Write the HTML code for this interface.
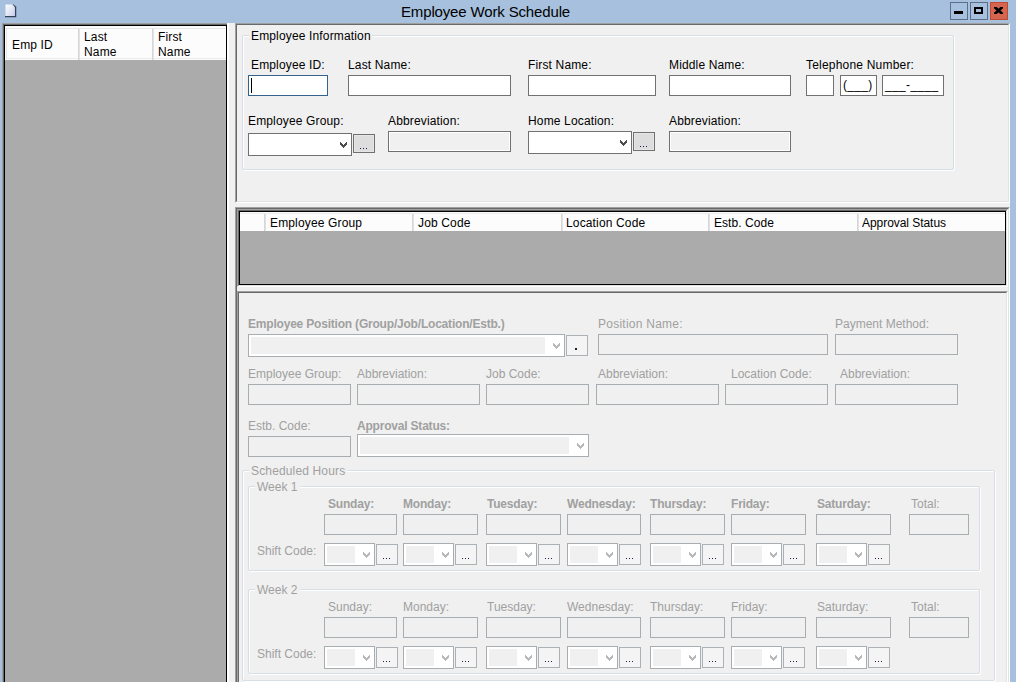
<!DOCTYPE html>
<html><head><meta charset="utf-8"><style>
html,body{margin:0;padding:0;}
body{width:1016px;height:682px;overflow:hidden;position:relative;background:#a6c0dd;font-family:"Liberation Sans", sans-serif;font-size:12px;}
.a{position:absolute;box-sizing:content-box;}
.t{position:absolute;font-size:12px;line-height:14px;white-space:nowrap;}
.btn{text-align:center;font-size:12px;color:#000;letter-spacing:-1px;}
.grp{border:1px solid #d5dfe5;border-radius:2px;box-shadow:inset 1px 1px 0 #fff, 1px 1px 0 #fff;}
</style></head><body>

<svg class="a" style="left:0px;top:0px" width="20" height="20" viewBox="0 0 20 20"><defs><linearGradient id="pg" x1="0" y1="0" x2="1" y2="1"><stop offset="0" stop-color="#ffffff"/><stop offset="1" stop-color="#c6cdea"/></linearGradient></defs><path d="M5.5 4.5 H13 L15 6.5 V16.5 H5.5 Z" fill="url(#pg)"/><path d="M5 16.6 H15.6 V6.6" fill="none" stroke="#34435e" stroke-width="1.3"/><path d="M13 4.6 L15.4 7" fill="none" stroke="#34435e" stroke-width="1.1"/><path d="M13.2 5.2 L14.5 6.5 L13.2 6.5 Z" fill="#fff"/></svg>
<div class="t" style="left:401px;top:6px;color:#000;letter-spacing:-0.15px;font-size:15px;line-height:17px;top:3px;">Employee Work Schedule</div>
<div class="a" style="left:950px;top:2px;width:16px;height:16px;border:1px solid #5b6e8a;background:#a6c0dd;"></div>
<div class="a" style="left:970px;top:2px;width:16px;height:16px;border:1px solid #5b6e8a;background:#a6c0dd;"></div>
<div class="a" style="left:990px;top:2px;width:16px;height:16px;border:1px solid #bd4a33;background:#d4654f;"></div>
<div class="a" style="left:954px;top:11px;width:9px;height:3px;background:#000;"></div>
<div class="a" style="left:974px;top:7px;width:5px;height:3px;border:2px solid #000;background:#a6c0dd;"></div>
<svg class="a" style="left:994px;top:7px" width="9" height="7" viewBox="0 0 9 7"><path d="M0 -0.6 L9 7.6 M9 -0.6 L0 7.6" stroke="#000" stroke-width="2.7"/></svg>
<div class="a" style="left:2px;top:23px;width:225px;height:698px;border-style:solid;border-width:1px;border-color:#a0a0a0 #fff #fff #a0a0a0;"></div>
<div class="a" style="left:3px;top:24px;width:223px;height:696px;border-style:solid;border-width:1px;border-color:#696969 #e3e3e3 #e3e3e3 #696969;"></div>
<div class="a" style="left:4px;top:25px;width:221px;height:700px;border:1px solid #000;background:#ababab;"></div>
<div class="a" style="left:5px;top:26px;width:221px;height:34px;background:#fcfcfc;"></div>
<div class="a" style="left:6px;top:28px;width:220px;height:1px;background:#e6e6e6;"></div>
<div class="a" style="left:6px;top:28px;width:1px;height:31px;background:#e6e6e6;"></div>
<div class="a" style="left:6px;top:58px;width:220px;height:1px;background:#ececec;"></div>
<div class="a" style="left:78px;top:29px;width:1px;height:31px;background:#d6d6d6;"></div>
<div class="a" style="left:79px;top:29px;width:1px;height:31px;background:#e2e2e2;"></div>
<div class="a" style="left:152px;top:29px;width:1px;height:31px;background:#d6d6d6;"></div>
<div class="a" style="left:153px;top:29px;width:1px;height:31px;background:#e2e2e2;"></div>
<div class="t" style="left:12px;top:38px;color:#000;letter-spacing:0.15px;">Emp ID</div>
<div class="t" style="left:84px;top:30px;color:#000;letter-spacing:0.15px;">Last</div>
<div class="t" style="left:84px;top:45px;color:#000;letter-spacing:0.15px;">Name</div>
<div class="t" style="left:158px;top:30px;color:#000;letter-spacing:0.15px;">First</div>
<div class="t" style="left:158px;top:45px;color:#000;letter-spacing:0.15px;">Name</div>
<div class="a" style="left:229px;top:23px;width:6px;height:700px;background:#f0f0f0;"></div>
<div class="a" style="left:227px;top:23px;width:2px;height:700px;background:#fff;"></div>
<div class="a" style="left:235px;top:23px;width:775px;height:700px;background:#f0f0f0;"></div>
<div class="a" style="left:235px;top:23px;width:773px;height:178px;border-style:solid;border-width:1px;border-color:#a0a0a0 #fff #fff #a0a0a0;"></div>
<div class="a" style="left:236px;top:24px;width:771px;height:176px;border-style:solid;border-width:1px;border-color:#696969 #e3e3e3 #e3e3e3 #696969;"></div>
<div class="a" style="left:235px;top:207px;width:773px;height:598px;border-style:solid;border-width:1px;border-color:#a0a0a0 #fff #fff #a0a0a0;"></div>
<div class="a" style="left:236px;top:208px;width:771px;height:596px;border-style:solid;border-width:1px;border-color:#696969 #e3e3e3 #e3e3e3 #696969;"></div>
<div class="a grp" style="left:242px;top:35px;width:710px;height:133px;"></div>
<div class="a" style="left:249px;top:33px;width:123px;height:4px;background:#f0f0f0;"></div>
<div class="t" style="left:251px;top:29px;color:#000;letter-spacing:0.15px;">Employee Information</div>
<div class="t" style="left:251px;top:58px;color:#000;letter-spacing:0.15px;">Employee ID:</div>
<div class="t" style="left:348px;top:58px;color:#000;letter-spacing:0.15px;">Last Name:</div>
<div class="t" style="left:528px;top:58px;color:#000;letter-spacing:0.15px;">First Name:</div>
<div class="t" style="left:669px;top:58px;color:#000;letter-spacing:0.15px;">Middle Name:</div>
<div class="t" style="left:806px;top:58px;color:#000;letter-spacing:0.2px;">Telephone Number:</div>
<div class="a" style="left:248px;top:75px;width:78px;height:19px;border:1px solid #34638f;background:#fff;"><div class="a" style="left:2px;top:2px;width:1px;height:15px;background:#000"></div></div>
<div class="a" style="left:348px;top:75px;width:161px;height:19px;border:1px solid #717171;background:#fff;"></div>
<div class="a" style="left:528px;top:75px;width:126px;height:19px;border:1px solid #717171;background:#fff;"></div>
<div class="a" style="left:669px;top:75px;width:120px;height:19px;border:1px solid #717171;background:#fff;"></div>
<div class="a" style="left:806px;top:75px;width:26px;height:19px;border:1px solid #717171;background:#fff;"></div>
<div class="a" style="left:840px;top:75px;width:35px;height:19px;border:1px solid #717171;background:#fff;"><div class="t" style="left:2px;top:2px;letter-spacing:0.3px">(___)</div></div>
<div class="a" style="left:882px;top:75px;width:60px;height:19px;border:1px solid #717171;background:#fff;"><div class="t" style="left:2px;top:2px;letter-spacing:0.35px">___-____</div></div>
<div class="t" style="left:248px;top:114px;color:#000;letter-spacing:0.15px;">Employee Group:</div>
<div class="t" style="left:388px;top:114px;color:#000;letter-spacing:0.15px;">Abbreviation:</div>
<div class="t" style="left:528px;top:114px;color:#000;letter-spacing:0.15px;">Home Location:</div>
<div class="t" style="left:669px;top:114px;color:#000;letter-spacing:0.15px;">Abbreviation:</div>
<div class="a" style="left:248px;top:133px;width:102px;height:21px;border:1px solid #717171;background:#fff;"></div>
<svg class="a" style="left:340px;top:142px" width="7" height="6" viewBox="0 0 7 6" shape-rendering="crispEdges"><g fill="#4d4d4d"><rect x="0" y="0" width="1" height="3"/><rect x="1" y="1" width="1" height="3"/><rect x="2" y="2" width="1" height="3"/><rect x="3" y="3" width="1" height="3"/><rect x="4" y="2" width="1" height="3"/><rect x="5" y="1" width="1" height="3"/><rect x="6" y="0" width="1" height="3"/></g></svg>
<div class="a" style="left:353px;top:134px;width:20px;height:17px;border:1px solid #707070;background:#dddddd;box-shadow:inset 0 0 0 1px #e6e6e6;"></div>
<div class="a" style="left:360px;top:148px;width:1px;height:1px;background:#2a1a48"></div>
<div class="a" style="left:363px;top:148px;width:1px;height:1px;background:#2a1a48"></div>
<div class="a" style="left:366px;top:148px;width:1px;height:1px;background:#2a1a48"></div>
<div class="a" style="left:388px;top:131px;width:121px;height:19px;border:1px solid #717171;background:#f0f0f0;box-shadow:inset 1px 1px 0 #fff,inset -1px -1px 0 #fff;"></div>
<div class="a" style="left:528px;top:131px;width:102px;height:21px;border:1px solid #717171;background:#fff;"></div>
<svg class="a" style="left:620px;top:140px" width="7" height="6" viewBox="0 0 7 6" shape-rendering="crispEdges"><g fill="#4d4d4d"><rect x="0" y="0" width="1" height="3"/><rect x="1" y="1" width="1" height="3"/><rect x="2" y="2" width="1" height="3"/><rect x="3" y="3" width="1" height="3"/><rect x="4" y="2" width="1" height="3"/><rect x="5" y="1" width="1" height="3"/><rect x="6" y="0" width="1" height="3"/></g></svg>
<div class="a" style="left:633px;top:132px;width:20px;height:17px;border:1px solid #707070;background:#dddddd;box-shadow:inset 0 0 0 1px #e6e6e6;"></div>
<div class="a" style="left:640px;top:146px;width:1px;height:1px;background:#2a1a48"></div>
<div class="a" style="left:643px;top:146px;width:1px;height:1px;background:#2a1a48"></div>
<div class="a" style="left:646px;top:146px;width:1px;height:1px;background:#2a1a48"></div>
<div class="a" style="left:669px;top:131px;width:120px;height:19px;border:1px solid #717171;background:#f0f0f0;box-shadow:inset 1px 1px 0 #fff,inset -1px -1px 0 #fff;"></div>
<div class="a" style="left:237px;top:209px;width:769px;height:76px;border-style:solid;border-width:1px;border-color:#a0a0a0 #fff #fff #a0a0a0;"></div>
<div class="a" style="left:238px;top:210px;width:767px;height:74px;border-style:solid;border-width:1px;border-color:#696969 #e3e3e3 #e3e3e3 #696969;"></div>
<div class="a" style="left:239px;top:211px;width:765px;height:72px;border:1px solid #000;background:#ababab;"></div>
<div class="a" style="left:240px;top:212px;width:765px;height:19px;background:#fcfcfc;"></div>
<div class="a" style="left:240px;top:213px;width:765px;height:1px;background:#ececec;"></div>
<div class="a" style="left:264px;top:214px;width:1px;height:17px;background:#d6d6d6;"></div>
<div class="a" style="left:265px;top:214px;width:1px;height:17px;background:#e2e2e2;"></div>
<div class="a" style="left:412px;top:214px;width:1px;height:17px;background:#d6d6d6;"></div>
<div class="a" style="left:413px;top:214px;width:1px;height:17px;background:#e2e2e2;"></div>
<div class="a" style="left:561px;top:214px;width:1px;height:17px;background:#d6d6d6;"></div>
<div class="a" style="left:562px;top:214px;width:1px;height:17px;background:#e2e2e2;"></div>
<div class="a" style="left:708px;top:214px;width:1px;height:17px;background:#d6d6d6;"></div>
<div class="a" style="left:709px;top:214px;width:1px;height:17px;background:#e2e2e2;"></div>
<div class="a" style="left:857px;top:214px;width:1px;height:17px;background:#d6d6d6;"></div>
<div class="a" style="left:858px;top:214px;width:1px;height:17px;background:#e2e2e2;"></div>
<div class="t" style="left:270px;top:216px;color:#000;letter-spacing:0.15px;">Employee Group</div>
<div class="t" style="left:418px;top:216px;color:#000;letter-spacing:0.15px;">Job Code</div>
<div class="t" style="left:566px;top:216px;color:#000;letter-spacing:0.15px;">Location Code</div>
<div class="t" style="left:714px;top:216px;color:#000;letter-spacing:0.05px;">Estb. Code</div>
<div class="t" style="left:862px;top:216px;color:#000;letter-spacing:-0.05px;">Approval Status</div>
<div class="a" style="left:237px;top:291px;width:769px;height:498px;border-style:solid;border-width:1px;border-color:#a0a0a0 #fff #fff #a0a0a0;"></div>
<div class="a" style="left:238px;top:292px;width:767px;height:496px;border-style:solid;border-width:1px;border-color:#696969 #e3e3e3 #e3e3e3 #696969;"></div>
<div class="t" style="left:248px;top:317px;color:#a0a0a0;font-weight:bold;letter-spacing:-0.2px;">Employee Position (Group/Job/Location/Estb.)</div>
<div class="t" style="left:598px;top:317px;color:#a0a0a0;letter-spacing:0.25px;">Position Name:</div>
<div class="t" style="left:835px;top:317px;color:#a0a0a0;">Payment Method:</div>
<div class="a" style="left:248px;top:334px;width:315px;height:21px;border:1px solid #a7adb1;background:#fff;"></div>
<div class="a" style="left:251px;top:337px;width:294px;height:17px;background:#f0f0f0;"></div>
<svg class="a" style="left:553px;top:343px" width="7" height="6" viewBox="0 0 7 6" shape-rendering="crispEdges"><g fill="#b8b8b8"><rect x="0" y="0" width="1" height="3"/><rect x="1" y="1" width="1" height="3"/><rect x="2" y="2" width="1" height="3"/><rect x="3" y="3" width="1" height="3"/><rect x="4" y="2" width="1" height="3"/><rect x="5" y="1" width="1" height="3"/><rect x="6" y="0" width="1" height="3"/></g></svg>
<div class="a" style="left:566px;top:335px;width:20px;height:19px;border:1px solid #abb1b5;background:#f4f4f4;"></div>
<div class="a" style="left:575px;top:348px;width:2px;height:2px;background:#222"></div>
<div class="a" style="left:598px;top:334px;width:228px;height:19px;border:1px solid #a7adb1;background:#f0f0f0;"></div>
<div class="a" style="left:835px;top:334px;width:121px;height:19px;border:1px solid #a7adb1;background:#f0f0f0;"></div>
<div class="t" style="left:248px;top:367px;color:#a0a0a0;">Employee Group:</div>
<div class="t" style="left:357px;top:367px;color:#a0a0a0;">Abbreviation:</div>
<div class="t" style="left:486px;top:367px;color:#a0a0a0;">Job Code:</div>
<div class="t" style="left:598px;top:367px;color:#a0a0a0;">Abbreviation:</div>
<div class="t" style="left:731px;top:367px;color:#a0a0a0;">Location Code:</div>
<div class="t" style="left:840px;top:367px;color:#a0a0a0;">Abbreviation:</div>
<div class="a" style="left:248px;top:384px;width:101px;height:19px;border:1px solid #a7adb1;background:#f0f0f0;"></div>
<div class="a" style="left:357px;top:384px;width:121px;height:19px;border:1px solid #a7adb1;background:#f0f0f0;"></div>
<div class="a" style="left:486px;top:384px;width:101px;height:19px;border:1px solid #a7adb1;background:#f0f0f0;"></div>
<div class="a" style="left:596px;top:384px;width:121px;height:19px;border:1px solid #a7adb1;background:#f0f0f0;"></div>
<div class="a" style="left:725px;top:384px;width:101px;height:19px;border:1px solid #a7adb1;background:#f0f0f0;"></div>
<div class="a" style="left:835px;top:384px;width:121px;height:19px;border:1px solid #a7adb1;background:#f0f0f0;"></div>
<div class="t" style="left:248px;top:419px;color:#a0a0a0;">Estb. Code:</div>
<div class="t" style="left:357px;top:419px;color:#a0a0a0;font-weight:bold;letter-spacing:-0.2px;">Approval Status:</div>
<div class="a" style="left:248px;top:436px;width:101px;height:19px;border:1px solid #a7adb1;background:#f0f0f0;"></div>
<div class="a" style="left:357px;top:434px;width:230px;height:21px;border:1px solid #a7adb1;background:#fff;"></div>
<div class="a" style="left:360px;top:437px;width:209px;height:17px;background:#f0f0f0;"></div>
<svg class="a" style="left:577px;top:443px" width="7" height="6" viewBox="0 0 7 6" shape-rendering="crispEdges"><g fill="#b8b8b8"><rect x="0" y="0" width="1" height="3"/><rect x="1" y="1" width="1" height="3"/><rect x="2" y="2" width="1" height="3"/><rect x="3" y="3" width="1" height="3"/><rect x="4" y="2" width="1" height="3"/><rect x="5" y="1" width="1" height="3"/><rect x="6" y="0" width="1" height="3"/></g></svg>
<div class="a grp" style="left:242px;top:470px;width:751px;height:209px;"></div>
<div class="a" style="left:249px;top:468px;width:98px;height:4px;background:#f0f0f0;"></div>
<div class="t" style="left:251px;top:464px;color:#a0a0a0;letter-spacing:0.15px;">Scheduled Hours</div>
<div class="a grp" style="left:248px;top:486px;width:730px;height:83px;"></div>
<div class="a" style="left:255px;top:484px;width:45px;height:4px;background:#f0f0f0;"></div>
<div class="t" style="left:257px;top:480px;color:#a0a0a0;">Week 1</div>
<div class="t" style="left:328px;top:497px;color:#a0a0a0;font-weight:bold;letter-spacing:-0.2px;">Sunday:</div>
<div class="a" style="left:324px;top:514px;width:71px;height:19px;border:1px solid #a7adb1;background:#f0f0f0;"></div>
<div class="a" style="left:324px;top:543px;width:49px;height:21px;border:1px solid #a7adb1;background:#fff;"></div>
<div class="a" style="left:327px;top:546px;width:28px;height:17px;background:#f0f0f0;"></div>
<svg class="a" style="left:363px;top:552px" width="7" height="6" viewBox="0 0 7 6" shape-rendering="crispEdges"><g fill="#b8b8b8"><rect x="0" y="0" width="1" height="3"/><rect x="1" y="1" width="1" height="3"/><rect x="2" y="2" width="1" height="3"/><rect x="3" y="3" width="1" height="3"/><rect x="4" y="2" width="1" height="3"/><rect x="5" y="1" width="1" height="3"/><rect x="6" y="0" width="1" height="3"/></g></svg>
<div class="a" style="left:376px;top:544px;width:20px;height:19px;border:1px solid #abb1b5;background:#f4f4f4;"></div>
<div class="a" style="left:383px;top:558px;width:1px;height:1px;background:#2a1a48"></div>
<div class="a" style="left:386px;top:558px;width:1px;height:1px;background:#2a1a48"></div>
<div class="a" style="left:389px;top:558px;width:1px;height:1px;background:#2a1a48"></div>
<div class="t" style="left:403px;top:497px;color:#a0a0a0;font-weight:bold;letter-spacing:-0.2px;">Monday:</div>
<div class="a" style="left:403px;top:514px;width:73px;height:19px;border:1px solid #a7adb1;background:#f0f0f0;"></div>
<div class="a" style="left:403px;top:543px;width:49px;height:21px;border:1px solid #a7adb1;background:#fff;"></div>
<div class="a" style="left:406px;top:546px;width:28px;height:17px;background:#f0f0f0;"></div>
<svg class="a" style="left:442px;top:552px" width="7" height="6" viewBox="0 0 7 6" shape-rendering="crispEdges"><g fill="#b8b8b8"><rect x="0" y="0" width="1" height="3"/><rect x="1" y="1" width="1" height="3"/><rect x="2" y="2" width="1" height="3"/><rect x="3" y="3" width="1" height="3"/><rect x="4" y="2" width="1" height="3"/><rect x="5" y="1" width="1" height="3"/><rect x="6" y="0" width="1" height="3"/></g></svg>
<div class="a" style="left:455px;top:544px;width:20px;height:19px;border:1px solid #abb1b5;background:#f4f4f4;"></div>
<div class="a" style="left:462px;top:558px;width:1px;height:1px;background:#2a1a48"></div>
<div class="a" style="left:465px;top:558px;width:1px;height:1px;background:#2a1a48"></div>
<div class="a" style="left:468px;top:558px;width:1px;height:1px;background:#2a1a48"></div>
<div class="t" style="left:487px;top:497px;color:#a0a0a0;font-weight:bold;letter-spacing:-0.2px;">Tuesday:</div>
<div class="a" style="left:486px;top:514px;width:73px;height:19px;border:1px solid #a7adb1;background:#f0f0f0;"></div>
<div class="a" style="left:486px;top:543px;width:49px;height:21px;border:1px solid #a7adb1;background:#fff;"></div>
<div class="a" style="left:489px;top:546px;width:28px;height:17px;background:#f0f0f0;"></div>
<svg class="a" style="left:525px;top:552px" width="7" height="6" viewBox="0 0 7 6" shape-rendering="crispEdges"><g fill="#b8b8b8"><rect x="0" y="0" width="1" height="3"/><rect x="1" y="1" width="1" height="3"/><rect x="2" y="2" width="1" height="3"/><rect x="3" y="3" width="1" height="3"/><rect x="4" y="2" width="1" height="3"/><rect x="5" y="1" width="1" height="3"/><rect x="6" y="0" width="1" height="3"/></g></svg>
<div class="a" style="left:538px;top:544px;width:20px;height:19px;border:1px solid #abb1b5;background:#f4f4f4;"></div>
<div class="a" style="left:545px;top:558px;width:1px;height:1px;background:#2a1a48"></div>
<div class="a" style="left:548px;top:558px;width:1px;height:1px;background:#2a1a48"></div>
<div class="a" style="left:551px;top:558px;width:1px;height:1px;background:#2a1a48"></div>
<div class="t" style="left:567px;top:497px;color:#a0a0a0;font-weight:bold;letter-spacing:-0.2px;">Wednesday:</div>
<div class="a" style="left:567px;top:514px;width:72px;height:19px;border:1px solid #a7adb1;background:#f0f0f0;"></div>
<div class="a" style="left:567px;top:543px;width:49px;height:21px;border:1px solid #a7adb1;background:#fff;"></div>
<div class="a" style="left:570px;top:546px;width:28px;height:17px;background:#f0f0f0;"></div>
<svg class="a" style="left:606px;top:552px" width="7" height="6" viewBox="0 0 7 6" shape-rendering="crispEdges"><g fill="#b8b8b8"><rect x="0" y="0" width="1" height="3"/><rect x="1" y="1" width="1" height="3"/><rect x="2" y="2" width="1" height="3"/><rect x="3" y="3" width="1" height="3"/><rect x="4" y="2" width="1" height="3"/><rect x="5" y="1" width="1" height="3"/><rect x="6" y="0" width="1" height="3"/></g></svg>
<div class="a" style="left:619px;top:544px;width:20px;height:19px;border:1px solid #abb1b5;background:#f4f4f4;"></div>
<div class="a" style="left:626px;top:558px;width:1px;height:1px;background:#2a1a48"></div>
<div class="a" style="left:629px;top:558px;width:1px;height:1px;background:#2a1a48"></div>
<div class="a" style="left:632px;top:558px;width:1px;height:1px;background:#2a1a48"></div>
<div class="t" style="left:650px;top:497px;color:#a0a0a0;font-weight:bold;letter-spacing:-0.2px;">Thursday:</div>
<div class="a" style="left:650px;top:514px;width:73px;height:19px;border:1px solid #a7adb1;background:#f0f0f0;"></div>
<div class="a" style="left:650px;top:543px;width:49px;height:21px;border:1px solid #a7adb1;background:#fff;"></div>
<div class="a" style="left:653px;top:546px;width:28px;height:17px;background:#f0f0f0;"></div>
<svg class="a" style="left:689px;top:552px" width="7" height="6" viewBox="0 0 7 6" shape-rendering="crispEdges"><g fill="#b8b8b8"><rect x="0" y="0" width="1" height="3"/><rect x="1" y="1" width="1" height="3"/><rect x="2" y="2" width="1" height="3"/><rect x="3" y="3" width="1" height="3"/><rect x="4" y="2" width="1" height="3"/><rect x="5" y="1" width="1" height="3"/><rect x="6" y="0" width="1" height="3"/></g></svg>
<div class="a" style="left:702px;top:544px;width:20px;height:19px;border:1px solid #abb1b5;background:#f4f4f4;"></div>
<div class="a" style="left:709px;top:558px;width:1px;height:1px;background:#2a1a48"></div>
<div class="a" style="left:712px;top:558px;width:1px;height:1px;background:#2a1a48"></div>
<div class="a" style="left:715px;top:558px;width:1px;height:1px;background:#2a1a48"></div>
<div class="t" style="left:731px;top:497px;color:#a0a0a0;font-weight:bold;letter-spacing:-0.2px;">Friday:</div>
<div class="a" style="left:731px;top:514px;width:73px;height:19px;border:1px solid #a7adb1;background:#f0f0f0;"></div>
<div class="a" style="left:731px;top:543px;width:49px;height:21px;border:1px solid #a7adb1;background:#fff;"></div>
<div class="a" style="left:734px;top:546px;width:28px;height:17px;background:#f0f0f0;"></div>
<svg class="a" style="left:770px;top:552px" width="7" height="6" viewBox="0 0 7 6" shape-rendering="crispEdges"><g fill="#b8b8b8"><rect x="0" y="0" width="1" height="3"/><rect x="1" y="1" width="1" height="3"/><rect x="2" y="2" width="1" height="3"/><rect x="3" y="3" width="1" height="3"/><rect x="4" y="2" width="1" height="3"/><rect x="5" y="1" width="1" height="3"/><rect x="6" y="0" width="1" height="3"/></g></svg>
<div class="a" style="left:783px;top:544px;width:20px;height:19px;border:1px solid #abb1b5;background:#f4f4f4;"></div>
<div class="a" style="left:790px;top:558px;width:1px;height:1px;background:#2a1a48"></div>
<div class="a" style="left:793px;top:558px;width:1px;height:1px;background:#2a1a48"></div>
<div class="a" style="left:796px;top:558px;width:1px;height:1px;background:#2a1a48"></div>
<div class="t" style="left:817px;top:497px;color:#a0a0a0;font-weight:bold;letter-spacing:-0.2px;">Saturday:</div>
<div class="a" style="left:816px;top:514px;width:73px;height:19px;border:1px solid #a7adb1;background:#f0f0f0;"></div>
<div class="a" style="left:816px;top:543px;width:49px;height:21px;border:1px solid #a7adb1;background:#fff;"></div>
<div class="a" style="left:819px;top:546px;width:28px;height:17px;background:#f0f0f0;"></div>
<svg class="a" style="left:855px;top:552px" width="7" height="6" viewBox="0 0 7 6" shape-rendering="crispEdges"><g fill="#b8b8b8"><rect x="0" y="0" width="1" height="3"/><rect x="1" y="1" width="1" height="3"/><rect x="2" y="2" width="1" height="3"/><rect x="3" y="3" width="1" height="3"/><rect x="4" y="2" width="1" height="3"/><rect x="5" y="1" width="1" height="3"/><rect x="6" y="0" width="1" height="3"/></g></svg>
<div class="a" style="left:868px;top:544px;width:20px;height:19px;border:1px solid #abb1b5;background:#f4f4f4;"></div>
<div class="a" style="left:875px;top:558px;width:1px;height:1px;background:#2a1a48"></div>
<div class="a" style="left:878px;top:558px;width:1px;height:1px;background:#2a1a48"></div>
<div class="a" style="left:881px;top:558px;width:1px;height:1px;background:#2a1a48"></div>
<div class="t" style="left:911px;top:497px;color:#a0a0a0;">Total:</div>
<div class="a" style="left:909px;top:514px;width:58px;height:19px;border:1px solid #a7adb1;background:#f0f0f0;"></div>
<div class="t" style="left:257px;top:544px;color:#a0a0a0;">Shift Code:</div>
<div class="a grp" style="left:248px;top:589px;width:730px;height:83px;"></div>
<div class="a" style="left:255px;top:587px;width:45px;height:4px;background:#f0f0f0;"></div>
<div class="t" style="left:257px;top:583px;color:#a0a0a0;">Week 2</div>
<div class="t" style="left:328px;top:600px;color:#a0a0a0;">Sunday:</div>
<div class="a" style="left:324px;top:617px;width:71px;height:19px;border:1px solid #a7adb1;background:#f0f0f0;"></div>
<div class="a" style="left:324px;top:646px;width:49px;height:21px;border:1px solid #a7adb1;background:#fff;"></div>
<div class="a" style="left:327px;top:649px;width:28px;height:17px;background:#f0f0f0;"></div>
<svg class="a" style="left:363px;top:655px" width="7" height="6" viewBox="0 0 7 6" shape-rendering="crispEdges"><g fill="#b8b8b8"><rect x="0" y="0" width="1" height="3"/><rect x="1" y="1" width="1" height="3"/><rect x="2" y="2" width="1" height="3"/><rect x="3" y="3" width="1" height="3"/><rect x="4" y="2" width="1" height="3"/><rect x="5" y="1" width="1" height="3"/><rect x="6" y="0" width="1" height="3"/></g></svg>
<div class="a" style="left:376px;top:647px;width:20px;height:19px;border:1px solid #abb1b5;background:#f4f4f4;"></div>
<div class="a" style="left:383px;top:661px;width:1px;height:1px;background:#2a1a48"></div>
<div class="a" style="left:386px;top:661px;width:1px;height:1px;background:#2a1a48"></div>
<div class="a" style="left:389px;top:661px;width:1px;height:1px;background:#2a1a48"></div>
<div class="t" style="left:403px;top:600px;color:#a0a0a0;">Monday:</div>
<div class="a" style="left:403px;top:617px;width:73px;height:19px;border:1px solid #a7adb1;background:#f0f0f0;"></div>
<div class="a" style="left:403px;top:646px;width:49px;height:21px;border:1px solid #a7adb1;background:#fff;"></div>
<div class="a" style="left:406px;top:649px;width:28px;height:17px;background:#f0f0f0;"></div>
<svg class="a" style="left:442px;top:655px" width="7" height="6" viewBox="0 0 7 6" shape-rendering="crispEdges"><g fill="#b8b8b8"><rect x="0" y="0" width="1" height="3"/><rect x="1" y="1" width="1" height="3"/><rect x="2" y="2" width="1" height="3"/><rect x="3" y="3" width="1" height="3"/><rect x="4" y="2" width="1" height="3"/><rect x="5" y="1" width="1" height="3"/><rect x="6" y="0" width="1" height="3"/></g></svg>
<div class="a" style="left:455px;top:647px;width:20px;height:19px;border:1px solid #abb1b5;background:#f4f4f4;"></div>
<div class="a" style="left:462px;top:661px;width:1px;height:1px;background:#2a1a48"></div>
<div class="a" style="left:465px;top:661px;width:1px;height:1px;background:#2a1a48"></div>
<div class="a" style="left:468px;top:661px;width:1px;height:1px;background:#2a1a48"></div>
<div class="t" style="left:487px;top:600px;color:#a0a0a0;">Tuesday:</div>
<div class="a" style="left:486px;top:617px;width:73px;height:19px;border:1px solid #a7adb1;background:#f0f0f0;"></div>
<div class="a" style="left:486px;top:646px;width:49px;height:21px;border:1px solid #a7adb1;background:#fff;"></div>
<div class="a" style="left:489px;top:649px;width:28px;height:17px;background:#f0f0f0;"></div>
<svg class="a" style="left:525px;top:655px" width="7" height="6" viewBox="0 0 7 6" shape-rendering="crispEdges"><g fill="#b8b8b8"><rect x="0" y="0" width="1" height="3"/><rect x="1" y="1" width="1" height="3"/><rect x="2" y="2" width="1" height="3"/><rect x="3" y="3" width="1" height="3"/><rect x="4" y="2" width="1" height="3"/><rect x="5" y="1" width="1" height="3"/><rect x="6" y="0" width="1" height="3"/></g></svg>
<div class="a" style="left:538px;top:647px;width:20px;height:19px;border:1px solid #abb1b5;background:#f4f4f4;"></div>
<div class="a" style="left:545px;top:661px;width:1px;height:1px;background:#2a1a48"></div>
<div class="a" style="left:548px;top:661px;width:1px;height:1px;background:#2a1a48"></div>
<div class="a" style="left:551px;top:661px;width:1px;height:1px;background:#2a1a48"></div>
<div class="t" style="left:567px;top:600px;color:#a0a0a0;">Wednesday:</div>
<div class="a" style="left:567px;top:617px;width:72px;height:19px;border:1px solid #a7adb1;background:#f0f0f0;"></div>
<div class="a" style="left:567px;top:646px;width:49px;height:21px;border:1px solid #a7adb1;background:#fff;"></div>
<div class="a" style="left:570px;top:649px;width:28px;height:17px;background:#f0f0f0;"></div>
<svg class="a" style="left:606px;top:655px" width="7" height="6" viewBox="0 0 7 6" shape-rendering="crispEdges"><g fill="#b8b8b8"><rect x="0" y="0" width="1" height="3"/><rect x="1" y="1" width="1" height="3"/><rect x="2" y="2" width="1" height="3"/><rect x="3" y="3" width="1" height="3"/><rect x="4" y="2" width="1" height="3"/><rect x="5" y="1" width="1" height="3"/><rect x="6" y="0" width="1" height="3"/></g></svg>
<div class="a" style="left:619px;top:647px;width:20px;height:19px;border:1px solid #abb1b5;background:#f4f4f4;"></div>
<div class="a" style="left:626px;top:661px;width:1px;height:1px;background:#2a1a48"></div>
<div class="a" style="left:629px;top:661px;width:1px;height:1px;background:#2a1a48"></div>
<div class="a" style="left:632px;top:661px;width:1px;height:1px;background:#2a1a48"></div>
<div class="t" style="left:650px;top:600px;color:#a0a0a0;">Thursday:</div>
<div class="a" style="left:650px;top:617px;width:73px;height:19px;border:1px solid #a7adb1;background:#f0f0f0;"></div>
<div class="a" style="left:650px;top:646px;width:49px;height:21px;border:1px solid #a7adb1;background:#fff;"></div>
<div class="a" style="left:653px;top:649px;width:28px;height:17px;background:#f0f0f0;"></div>
<svg class="a" style="left:689px;top:655px" width="7" height="6" viewBox="0 0 7 6" shape-rendering="crispEdges"><g fill="#b8b8b8"><rect x="0" y="0" width="1" height="3"/><rect x="1" y="1" width="1" height="3"/><rect x="2" y="2" width="1" height="3"/><rect x="3" y="3" width="1" height="3"/><rect x="4" y="2" width="1" height="3"/><rect x="5" y="1" width="1" height="3"/><rect x="6" y="0" width="1" height="3"/></g></svg>
<div class="a" style="left:702px;top:647px;width:20px;height:19px;border:1px solid #abb1b5;background:#f4f4f4;"></div>
<div class="a" style="left:709px;top:661px;width:1px;height:1px;background:#2a1a48"></div>
<div class="a" style="left:712px;top:661px;width:1px;height:1px;background:#2a1a48"></div>
<div class="a" style="left:715px;top:661px;width:1px;height:1px;background:#2a1a48"></div>
<div class="t" style="left:731px;top:600px;color:#a0a0a0;">Friday:</div>
<div class="a" style="left:731px;top:617px;width:73px;height:19px;border:1px solid #a7adb1;background:#f0f0f0;"></div>
<div class="a" style="left:731px;top:646px;width:49px;height:21px;border:1px solid #a7adb1;background:#fff;"></div>
<div class="a" style="left:734px;top:649px;width:28px;height:17px;background:#f0f0f0;"></div>
<svg class="a" style="left:770px;top:655px" width="7" height="6" viewBox="0 0 7 6" shape-rendering="crispEdges"><g fill="#b8b8b8"><rect x="0" y="0" width="1" height="3"/><rect x="1" y="1" width="1" height="3"/><rect x="2" y="2" width="1" height="3"/><rect x="3" y="3" width="1" height="3"/><rect x="4" y="2" width="1" height="3"/><rect x="5" y="1" width="1" height="3"/><rect x="6" y="0" width="1" height="3"/></g></svg>
<div class="a" style="left:783px;top:647px;width:20px;height:19px;border:1px solid #abb1b5;background:#f4f4f4;"></div>
<div class="a" style="left:790px;top:661px;width:1px;height:1px;background:#2a1a48"></div>
<div class="a" style="left:793px;top:661px;width:1px;height:1px;background:#2a1a48"></div>
<div class="a" style="left:796px;top:661px;width:1px;height:1px;background:#2a1a48"></div>
<div class="t" style="left:817px;top:600px;color:#a0a0a0;">Saturday:</div>
<div class="a" style="left:816px;top:617px;width:73px;height:19px;border:1px solid #a7adb1;background:#f0f0f0;"></div>
<div class="a" style="left:816px;top:646px;width:49px;height:21px;border:1px solid #a7adb1;background:#fff;"></div>
<div class="a" style="left:819px;top:649px;width:28px;height:17px;background:#f0f0f0;"></div>
<svg class="a" style="left:855px;top:655px" width="7" height="6" viewBox="0 0 7 6" shape-rendering="crispEdges"><g fill="#b8b8b8"><rect x="0" y="0" width="1" height="3"/><rect x="1" y="1" width="1" height="3"/><rect x="2" y="2" width="1" height="3"/><rect x="3" y="3" width="1" height="3"/><rect x="4" y="2" width="1" height="3"/><rect x="5" y="1" width="1" height="3"/><rect x="6" y="0" width="1" height="3"/></g></svg>
<div class="a" style="left:868px;top:647px;width:20px;height:19px;border:1px solid #abb1b5;background:#f4f4f4;"></div>
<div class="a" style="left:875px;top:661px;width:1px;height:1px;background:#2a1a48"></div>
<div class="a" style="left:878px;top:661px;width:1px;height:1px;background:#2a1a48"></div>
<div class="a" style="left:881px;top:661px;width:1px;height:1px;background:#2a1a48"></div>
<div class="t" style="left:911px;top:600px;color:#a0a0a0;">Total:</div>
<div class="a" style="left:909px;top:617px;width:58px;height:19px;border:1px solid #a7adb1;background:#f0f0f0;"></div>
<div class="t" style="left:257px;top:647px;color:#a0a0a0;">Shift Code:</div>
</body></html>
